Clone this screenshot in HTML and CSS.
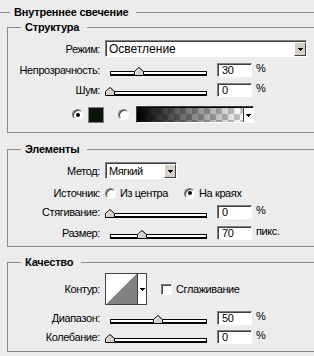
FILE: index.html
```html
<!DOCTYPE html>
<html>
<head>
<meta charset="utf-8">
<link rel="stylesheet" href="styles.css">
</head>
<body>
<fieldset class="outer">
  <legend>Внутреннее свечение</legend>

  <fieldset class="group g-structure">
    <legend>Структура</legend>
    <div class="rows">
      <div class="row h17">
        <span class="lbl">Режим:</span>
        <div class="select sel-wide"><span class="sel-text">Осветление</span><span class="sel-btn"><svg width="5" height="3"><path d="M0 0h5v1H0zM1 1h3v1H1zM2 2h1v1H2z"/></svg></span></div>
      </div>
      <div class="row h14 mt6">
        <span class="lbl">Непрозрачность:</span>
        <div class="slider"><div class="track"></div><svg class="thumb" style="left:29px" width="10" height="9" viewBox="0 0 10 9"><path d="M0.5 8.5V4.5L5 0.5L9.5 4.5V8.5Z" fill="#d4d0c8" stroke="#000"/><path d="M1.5 7.5V5L5 2" fill="none" stroke="#fff"/></svg></div>
        <div class="field">30</div><span class="unit">%</span>
      </div>
      <div class="row h14 mt6">
        <span class="lbl">Шум:</span>
        <div class="slider"><div class="track"></div><svg class="thumb" style="left:0px" width="10" height="9" viewBox="0 0 10 9"><path d="M0.5 8.5V4.5L5 0.5L9.5 4.5V8.5Z" fill="#d4d0c8" stroke="#000"/><path d="M1.5 7.5V5L5 2" fill="none" stroke="#fff"/></svg></div>
        <div class="field">0</div><span class="unit">%</span>
      </div>
      <div class="row h17 mt9 color-row">
        <span class="radio checked"></span>
        <span class="swatch"></span>
        <span class="radio r2"></span>
        <div class="grad"><span class="grad-fill"></span><span class="grad-btn"><svg width="5" height="3"><path d="M0 0h5v1H0zM1 1h3v1H1zM2 2h1v1H2z"/></svg></span></div>
      </div>
    </div>
  </fieldset>

  <fieldset class="group g-elements">
    <legend>Элементы</legend>
    <div class="rows">
      <div class="row h17">
        <span class="lbl">Метод:</span>
        <div class="select sel-short"><span class="sel-text">Мягкий</span><span class="sel-btn"><svg width="5" height="3"><path d="M0 0h5v1H0zM1 1h3v1H1zM2 2h1v1H2z"/></svg></span></div>
      </div>
      <div class="row h14 mt7">
        <span class="lbl">Источник:</span>
        <span class="radio"></span><span class="opt">Из центра</span>
        <span class="radio checked r3"></span><span class="opt">На краях</span>
      </div>
      <div class="row h14 mt5">
        <span class="lbl">Стягивание:</span>
        <div class="slider"><div class="track"></div><svg class="thumb" style="left:0px" width="10" height="9" viewBox="0 0 10 9"><path d="M0.5 8.5V4.5L5 0.5L9.5 4.5V8.5Z" fill="#d4d0c8" stroke="#000"/><path d="M1.5 7.5V5L5 2" fill="none" stroke="#fff"/></svg></div>
        <div class="field">0</div><span class="unit">%</span>
      </div>
      <div class="row h14 mt7">
        <span class="lbl">Размер:</span>
        <div class="slider"><div class="track"></div><svg class="thumb" style="left:32px" width="10" height="9" viewBox="0 0 10 9"><path d="M0.5 8.5V4.5L5 0.5L9.5 4.5V8.5Z" fill="#d4d0c8" stroke="#000"/><path d="M1.5 7.5V5L5 2" fill="none" stroke="#fff"/></svg></div>
        <div class="field">70</div><span class="unit">пикс.</span>
      </div>
    </div>
  </fieldset>

  <fieldset class="group g-quality">
    <legend>Качество</legend>
    <div class="rows">
      <div class="row h32">
        <span class="lbl">Контур:</span>
        <div class="contour">
          <svg class="contour-prev" width="31" height="30" viewBox="0 0 31 30"><rect width="31" height="30" fill="#fff"/><path d="M0 30L31 0V30Z" fill="#808080"/></svg>
          <span class="contour-btn"><svg width="5" height="3"><path d="M0 0h5v1H0zM1 1h3v1H1zM2 2h1v1H2z"/></svg></span>
        </div>
        <span class="check"></span><span class="opt">Сглаживание</span>
      </div>
      <div class="row h14 mt6">
        <span class="lbl">Диапазон:</span>
        <div class="slider"><div class="track"></div><svg class="thumb" style="left:48px" width="10" height="9" viewBox="0 0 10 9"><path d="M0.5 8.5V4.5L5 0.5L9.5 4.5V8.5Z" fill="#d4d0c8" stroke="#000"/><path d="M1.5 7.5V5L5 2" fill="none" stroke="#fff"/></svg></div>
        <div class="field">50</div><span class="unit">%</span>
      </div>
      <div class="row h14 mt5">
        <span class="lbl">Колебание:</span>
        <div class="slider"><div class="track"></div><svg class="thumb" style="left:0px" width="10" height="9" viewBox="0 0 10 9"><path d="M0.5 8.5V4.5L5 0.5L9.5 4.5V8.5Z" fill="#d4d0c8" stroke="#000"/><path d="M1.5 7.5V5L5 2" fill="none" stroke="#fff"/></svg></div>
        <div class="field">0</div><span class="unit">%</span>
      </div>
    </div>
  </fieldset>
</fieldset>
</body>
</html>
```

FILE: styles.css
```css
html, body {
  margin: 0;
  padding: 0;
}
body {
  width: 314px;
  height: 356px;
  overflow: hidden;
  background: #ececec;
  color: #000;
  font: 11px "Liberation Sans", Arial, sans-serif;
  letter-spacing: -0.4px;
}
fieldset {
  margin: 0;
  padding: 0;
  min-width: 0;
}
legend {
  font-weight: bold;
  line-height: 13px;
  letter-spacing: -0.2px;
  padding: 0 8px 0 4px;
}
.outer {
  border: none;
  border-top: 1px solid #8a8a8a;
  margin-top: 6px;
  padding-top: 2px;
}
.outer > legend {
  margin-left: 10px;
}
.group {
  border: 1px solid #8a8a8a;
  border-right: none;
  margin-left: 7px;
}
.group > legend {
  margin-left: 13px;
}
.g-elements {
  margin-top: 10px;
}
.g-quality {
  margin-top: 9px;
}
.rows {
  display: flex;
  flex-direction: column;
}
.g-structure .rows { padding: 6px 0 9px; }
.g-elements .rows { padding: 6px 0 6px; }
.g-quality .rows { padding: 4px 0 7px; }

.row {
  display: flex;
  align-items: center;
}
.h14 { height: 14px; }
.h17 { height: 17px; }
.h32 { height: 32px; }
.mt5 { margin-top: 5px; }
.mt6 { margin-top: 6px; }
.mt7 { margin-top: 7px; }
.mt9 { margin-top: 9px; }

.lbl {
  width: 92px;
  flex: none;
  text-align: right;
  margin-right: 5px;
  white-space: nowrap;
}

/* select */
.select {
  box-sizing: border-box;
  height: 17px;
  display: flex;
  background: #fff;
  border: 1px solid;
  border-color: #808080 #fff #fff #808080;
  box-shadow: inset 1px 1px 0 #404040;
}
.sel-wide { width: 202px; }
.sel-short { width: 72px; }
.sel-text {
  flex: 1;
  padding: 1px 0 0 3px;
  line-height: 14px;
}
.sel-wide .sel-text {
  font-size: 12px;
  letter-spacing: 0;
}
.sel-btn {
  box-sizing: border-box;
  width: 12px;
  height: 14px;
  margin: 1px 0 0 0;
  background: #d4d0c8;
  border: 1px solid;
  border-color: #fff #404040 #404040 #fff;
  display: flex;
  align-items: center;
  justify-content: center;
}
svg path { shape-rendering: crispEdges; }

/* slider */
.slider {
  position: relative;
  width: 107px;
  height: 14px;
  flex: none;
}
.track {
  box-sizing: border-box;
  margin: 8px 0 0 5px;
  width: 97px;
  height: 5px;
  background: #fff;
  border: 1px solid #000;
  border-bottom-width: 2px;
}
.thumb {
  position: absolute;
  top: 4px;
}
.thumb path { shape-rendering: auto; }

/* text field */
.field {
  box-sizing: border-box;
  width: 35px;
  height: 14px;
  margin-left: 5px;
  padding-left: 4px;
  line-height: 12px;
  background: #fff;
  border: 1px solid;
  border-color: #808080 #fff #fff #808080;
  box-shadow: inset 1px 1px 0 #404040;
}
.unit {
  margin-left: 4px;
  align-self: flex-start;
  line-height: 11px;
}

/* radios */
.radio {
  box-sizing: border-box;
  width: 11px;
  height: 11px;
  flex: none;
  border-radius: 50%;
  background: #fff;
  border: 1px solid;
  border-color: #808080 #fff #fff #808080;
  box-shadow: inset 1px 1px 0 #404040;
  display: flex;
  align-items: center;
  justify-content: center;
}
.radio.checked::after {
  content: "";
  width: 4px;
  height: 4px;
  border-radius: 50%;
  background: #000;
}
.opt {
  margin-left: 4px;
  white-space: nowrap;
}
.r3 { margin-left: 16px; }

.color-row { padding-left: 64px; }
.swatch {
  box-sizing: border-box;
  width: 16px;
  height: 16px;
  margin-left: 5px;
  background: #0a160a;
  border: 1px solid #808080;
}
.r2 { margin-left: 14px; }
.grad {
  box-sizing: border-box;
  width: 118px;
  height: 17px;
  margin-left: 7px;
  display: flex;
  background: #fff;
  border: 1px solid;
  border-color: #404040 #fff #fff #404040;
  box-shadow: inset 1px 1px 0 #000;
  padding: 1px 0 0 1px;
}
.grad-fill {
  flex: 1;
  background:
    linear-gradient(to right, #000, rgba(0,0,0,0)),
    repeating-conic-gradient(#c8c8c8 0 25%, #fff 0 50%) 0 0 / 12px 12px;
}
.grad-btn {
  width: 9px;
  border-left: 1px solid #404040;
  background: #fff;
  display: flex;
  align-items: center;
  justify-content: center;
}

/* contour */
.contour {
  box-sizing: border-box;
  width: 42px;
  height: 32px;
  display: flex;
  background: #fff;
  border: 1px solid #404040;
}
.contour-prev { display: block; }
.contour-btn {
  flex: 1;
  border-left: 1px solid #404040;
  display: flex;
  align-items: center;
  justify-content: center;
}
.check {
  box-sizing: border-box;
  width: 11px;
  height: 11px;
  margin-left: 14px;
  background: #fff;
  border: 1px solid;
  border-color: #808080 #fff #fff #808080;
  box-shadow: inset 1px 1px 0 #404040;
}
```
